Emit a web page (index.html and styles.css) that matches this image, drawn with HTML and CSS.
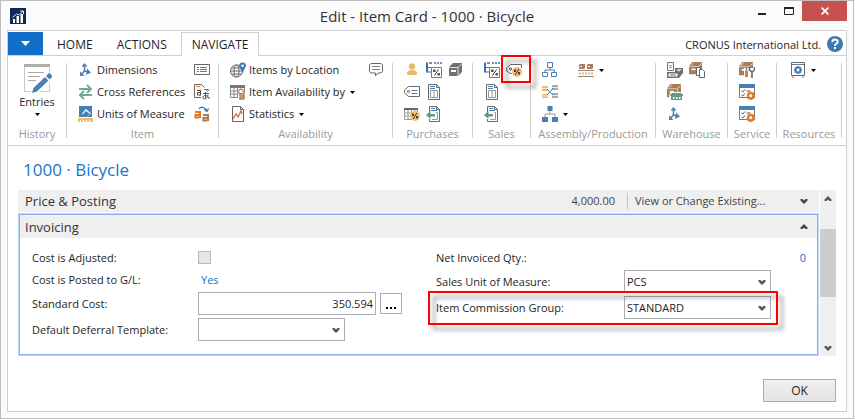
FILE: index.html
```html
<!DOCTYPE html>
<html lang="en">
<head>
<meta charset="utf-8">
<meta name="viewport" content="width=device-width, initial-scale=1">
<title>Edit - Item Card - 1000 · Bicycle</title>
<link rel="stylesheet" href="styles.css">
</head>
<body>
<svg class="sprite" aria-hidden="true">
  <symbol id="i-chev" viewBox="0 0 8 6"><path d="M.5 1h2L4 2.600 5.500 1h2v1.500L4 6 .5 2.500z" fill="currentColor"/></symbol>
  <symbol id="i-chev-up" viewBox="0 0 8 6"><path d="M.5 5h2L4 3.400 5.500 5h2V3.500L4 0 .5 3.500z" fill="currentColor"/></symbol>
  <symbol id="i-drop" viewBox="0 0 5 3"><path d="M0 0h5L2.500 3z" fill="#000"/></symbol>
  <symbol id="i-axes" viewBox="0 0 16 16"><path d="M6.500 3v6M6.500 9l-3 3M6.500 9l4 1" fill="none" stroke="#4a7fb5" stroke-width="1.600"/><path d="M6.500 1l3 3.500h-6zM2 9.500V14h4.500zM9 6.500l4 4-5 2.500z" fill="#4a7fb5"/></symbol>
  <symbol id="i-discount" viewBox="0 0 16 16"><path d="M1 .5v10" stroke="#3f6fa8" stroke-width="2"/><path d="M3 1h3M8 1h2M11 1h2M14 1h2" stroke="#3f6fa8" stroke-width="1.400"/><path d="M2 5.500h3M2 10h3" stroke="#3f6fa8"/><path d="M5.500 5.500h10v10h-10z" fill="#fff" stroke="#777"/><path d="M12.500 7.500l-4 6" stroke="#333"/><path d="M7 7.500h2.500V10H7zM11.500 11H14v2.500h-2.500z" fill="#555"/></symbol>
  <symbol id="i-doc" viewBox="0 0 16 16"><path d="M2.500.5h8l3 3v12h-11zM10.500.5v3h3" fill="#fff" stroke="#6a6a6a"/><path d="M4 2.500h5M4 4.500h5" stroke="#4a7fb5"/><path d="M4.500 6.500h7v7h-7zM8 6.500v7" stroke="#999" fill="none"/></symbol>
  <symbol id="i-return" viewBox="0 0 16 16"><path d="M3.500 6V.5h7l3 3v12h-10V13M10.500.5v3h3" fill="#fff" stroke="#6a6a6a"/><path d="M5 2.500h4M5 4.500h6" stroke="#4a7fb5"/><path d="M10 6.500h1.500v7H6" fill="none" stroke="#999"/><path d="M0 9l4.500-4v3H9v2.500H4.500V13z" fill="#5f9b83"/></symbol>
  <symbol id="i-box" viewBox="0 0 16 16"><path d="M4 0h12v9l-4 6H0V5z" fill="#a67c5b"/><path d="M2 4.500L6 1M12 5l4-3.500M0 5.500h12V14" stroke="#fff" stroke-opacity=".7" fill="none"/><path d="M3 8h5v2H3z" fill="#fff"/></symbol>
  <symbol id="i-gear" viewBox="0 0 8 8"><path d="M3 0h2v1l1-.6L7.600 2 7 3h1v2H7l.6 1L6 7.600 5 7v1H3V7l-1 .6L.4 6 1 5H0V3h1L.4 2 2 .4 3 1z" fill="currentColor"/><circle cx="4" cy="4" r="1.400" fill="#fff"/></symbol>
  <symbol id="i-check" viewBox="0 0 16 16"><path d="M.5 1.500h15v12H.5z" fill="#fff" stroke="#777"/><path d="M0 0h16v4H0z" fill="#4a7fb5"/><path d="M2.500 7l1.200 1L6 5.500M2.500 11l1.200 1L6 9.500" stroke="#444" fill="none"/><path d="M7.500 7h4" stroke="#555"/><use href="#i-gear" x="7.500" y="7.500" width="8.500" height="8.500" color="#e87722"/></symbol>
  <symbol id="i-badge" viewBox="0 0 10 10"><circle cx="5" cy="5" r="5" fill="#f0bf74"/><path d="M6.800 2L3.200 8" stroke="#333"/><path d="M2 2.500h2v2.500H2zM6 5h2v2.500H6z" fill="#444"/></symbol>
  <symbol id="i-tag" viewBox="0 0 16 16"><path d="M4.500 2.500h11v10h-11L.6 9V6z" fill="#fff" stroke="#6a6a6a"/><circle cx="4.500" cy="7.500" r="1.100" fill="none" stroke="#555"/><path d="M7.500 6.500h6M7.500 9.500h6" stroke="#4a7fb5"/></symbol>
</svg>

<div class="window">
  <header class="titlebar">
    <svg class="logo" viewBox="0 0 16 16" aria-hidden="true"><path d="M0 0h16v16H0z" fill="#0b2a55"/><path d="M3 11h2v4H3zM6.500 8h2.500v7H6.500zM10.500 6h2.500v9h-2.500z" fill="#fff"/><path d="M2.500 9.500l4-3.500 3 1 3.500-4M10 3h3.500v3" fill="none" stroke="#dfe7f0"/></svg>
    <h1 class="window-title">Edit - Item Card - 1000 · Bicycle</h1>
    <div class="window-buttons">
      <button class="win-btn" aria-label="Minimize"><svg width="10" height="10" viewBox="0 0 10 10"><path d="M1 7h8v2H1z" fill="#222"/></svg></button>
      <button class="win-btn" aria-label="Maximize"><svg width="10" height="8" viewBox="0 0 10 8"><path d="M.5 1h9v6.500h-9z" fill="none" stroke="#222"/><path d="M0 0h10v2H0z" fill="#222"/></svg></button>
      <button class="win-btn close" aria-label="Close"><svg width="8" height="8" viewBox="0 0 8 8"><path d="M.7.7l6.600 6.600M7.300.7L.7 7.300" stroke="#fff" stroke-width="1.700"/></svg></button>
    </div>
  </header>

  <main class="shell">
    <nav class="tabs">
      <button class="app-menu" aria-label="Application menu"><svg width="9" height="5" viewBox="0 0 9 5"><path d="M0 0h9L4.500 5z" fill="#fff"/></svg></button>
      <button class="tab">HOME</button>
      <button class="tab">ACTIONS</button>
      <button class="tab active">NAVIGATE</button>
      <span class="company">CRONUS International Ltd.</span>
      <button class="help" aria-label="Help"><svg width="16" height="16" viewBox="0 0 16 16"><circle cx="8" cy="8" r="8" fill="#3f78b3"/><path d="M5.300 6c0-3.400 5.400-3.400 5.400-.3 0 2-2.700 2-2.700 4" fill="none" stroke="#fff" stroke-width="2"/><path d="M7 11h2v2H7z" fill="#fff"/></svg></button>
    </nav>

    <div class="ribbon">
      <section class="group history">
        <button class="big-cmd">
          <svg width="30" height="31" viewBox="0 0 30 31"><path d="M2.500 2.500h25v26h-25z" fill="#fff" stroke="#c9c9c9"/><path d="M2 1h26v3H2z" fill="#adadad"/><path d="M6 9.500h16M6 13.500h12M6 17.500h8" stroke="#aaa"/><path d="M8 31l2-8L25 9l5 3v5L15 31z" fill="#fff"/><path d="M10 30l1.500-5L23 14l3.500 3.500L15 28.500zM24 13l2.500-2.500c1-1 4.500 2.500 3.500 3.500L27.500 16.500z" fill="#4a80ba"/></svg>
          <span>Entries</span>
          <svg class="drop" width="5" height="3"><use href="#i-drop"/></svg>
        </button>
        <h2>History</h2>
      </section>

      <section class="group item">
        <div class="cmds">
          <button class="cmd"><svg class="ico"><use href="#i-axes"/></svg>Dimensions</button>
          <button class="cmd" aria-label="Extended texts"><svg class="ico" viewBox="0 0 16 16"><path d="M.5 2.500h15v10H.5z" fill="#fff" stroke="#666"/><path d="M3 5.500h2M3 7.500h2M3 9.500h2M6 5.500h7M6 7.500h7M6 9.500h7" stroke="#4a7fb5"/></svg></button>
          <button class="cmd"><svg class="ico" viewBox="0 0 16 16"><path d="M1 5h11M3 11h11" stroke="#74a893" stroke-width="2"/><path d="M9 1l4 4-4 4M6 7l-4 4 4 4" fill="none" stroke="#74a893" stroke-width="2"/></svg>Cross References</button>
          <button class="cmd" aria-label="Translations"><svg class="ico" viewBox="0 0 16 16"><path d="M7 13.500H.5V.5h7l3 3" fill="#fff" stroke="#666"/><path d="M2 2.500h4" stroke="#e87722"/><path d="M3 6.500h3.500v5M6.500 8.500H3.500v2.500h3" fill="none" stroke="#444"/><path d="M10 5.500h4M12 5.500l1.500 2L15.500 5" fill="none" stroke="#4a7fb5"/><path d="M9 9.500h6M11.500 8v7M14 11c-1 5-6 5-5 2s7-1 6 2" fill="none" stroke="#555"/></svg></button>
          <button class="cmd"><svg class="ico" viewBox="0 0 16 16"><path d="M1 0h13v11H1z" fill="#4a7fb5"/><path d="M8 3l5 4.500L8 12 4 7.500z" fill="#fff"/><path d="M8 5l4 3-3 3H5.500L5 8z" fill="#4a7fb5"/><path d="M0 12h15v4H0z" fill="#eac06b"/><path d="M2.500 14v2M5.500 14v2M8.500 14v2M11.500 14v2" stroke="#fff"/></svg>Units of Measure</button>
          <button class="cmd" aria-label="Substitutions"><svg class="ico" viewBox="0 0 16 16"><path d="M5 3c2-3 6-2 8 2M10 3.500l3 2 1.500-3" fill="none" stroke="#4a7fb5" stroke-width="1.400"/><path d="M1 6h5v6M6 9H1.500v2.500H5" fill="none" stroke="#e87722" stroke-width="2"/><path d="M9 9h5v6M14 12H9.500v2.500H13" fill="none" stroke="#a67c5b" stroke-width="2"/></svg></button>
        </div>
        <h2>Item</h2>
      </section>

      <section class="group availability">
        <div class="cmds">
          <button class="cmd"><svg class="ico" viewBox="0 0 16 16"><circle cx="6.500" cy="9" r="6" fill="#fff" stroke="#666"/><ellipse cx="6.500" cy="9" rx="2.500" ry="6" fill="none" stroke="#666"/><path d="M.5 9h12M1.500 6h10M1.500 12h10" stroke="#666"/><path d="M12.500 11L9 4a3.500 3.500 0 1 1 7 0z" fill="#3f78b3"/><circle cx="12.500" cy="3.800" r="1.300" fill="#fff"/></svg>Items by Location</button>
          <button class="cmd" aria-label="Comments"><svg class="ico" viewBox="0 0 16 16"><path d="M3 1.500h10l1.500 1.500v6.500L13 11h-3l-2.500 3V11H3L1.500 9.500V3z" fill="#fff" stroke="#666"/><path d="M4 4.500h8M4 7.500h8" stroke="#888"/></svg></button>
          <button class="cmd"><svg class="ico" viewBox="0 0 16 16"><path d="M.5 1.500h14v12H.5zM.5 7h14M.5 10h14M4 4v9M7.500 4v9M11 4v9" fill="#fff" stroke="#8a8a8a"/><path d="M0 1h15v3H0z" fill="#777"/><path d="M9 5.500h4v4H9z" fill="#fff" stroke="#e87722"/><path d="M8 10h8v6H8z" fill="#fff"/><path d="M9 11h5v4M14 13h-4v2h4" fill="none" stroke="#a67c5b" stroke-width="1.500"/></svg>Item Availability by<svg class="drop"><use href="#i-drop"/></svg></button>
          <span></span>
          <button class="cmd"><svg class="ico" viewBox="0 0 16 16"><path d="M2.500.5h8l3 3v12h-11zM10.500.5v3h3" fill="#fff" stroke="#666"/><path d="M3 13l3-5 2 3 3-6 1 3" fill="none" stroke="#d9604c" stroke-width="1.300"/></svg>Statistics<svg class="drop"><use href="#i-drop"/></svg></button>
        </div>
        <h2>Availability</h2>
      </section>

      <section class="group purchases">
        <div class="cmds">
          <button class="cmd" aria-label="Vendors"><svg class="ico" viewBox="0 0 16 16"><circle cx="8" cy="4.500" r="3.200" fill="#e9b872"/><path d="M3 13v-2c0-4 10-4 10 0v2z" fill="#e9b872"/></svg></button>
          <button class="cmd" aria-label="Line discounts"><svg class="ico"><use href="#i-discount"/></svg></button>
          <button class="cmd" aria-label="Orders"><svg class="ico" viewBox="0 0 16 16"><path d="M5 1h9v9l-4 4H1V5z" fill="#707070"/><path d="M1 5.500h9V14M10 5.500L14 1.500" stroke="#ddd" fill="none"/><path d="M3 8h5v2H3z" fill="#fff"/></svg></button>
          <button class="cmd" aria-label="Prices"><svg class="ico"><use href="#i-tag"/></svg></button>
          <button class="cmd" aria-label="Purchase orders"><svg class="ico"><use href="#i-doc"/></svg></button>
          <span></span>
          <button class="cmd" aria-label="Prepayment percentages"><svg class="ico" viewBox="0 0 16 16"><path d="M.5 2.500h13v11H.5zM.5 7h13M.5 10h13M4 4v9M7.500 4v9M11 4v9" fill="#fff" stroke="#999"/><path d="M0 2h14v2H0z" fill="#666"/><use href="#i-badge" x="6" y="5" width="10" height="10"/></svg></button>
          <button class="cmd" aria-label="Return orders"><svg class="ico"><use href="#i-return"/></svg></button>
        </div>
        <h2>Purchases</h2>
      </section>

      <section class="group sales">
        <div class="cmds">
          <button class="cmd" aria-label="Sales discounts"><svg class="ico"><use href="#i-discount"/></svg></button>
          <button class="cmd marked" aria-label="Commissions"><svg class="ico" viewBox="0 0 16 16"><path d="M15.500 6V2.500h-11L.6 6v3l3.900 2.500H6" fill="#fff" stroke="#6a6a6a"/><circle cx="4.500" cy="7" r="1.100" fill="none" stroke="#555"/><use href="#i-badge" x="6" y="5" width="10" height="10"/></svg></button>
          <button class="cmd" aria-label="Sales orders"><svg class="ico"><use href="#i-doc"/></svg></button>
          <span></span>
          <button class="cmd" aria-label="Sales return orders"><svg class="ico"><use href="#i-return"/></svg></button>
        </div>
        <h2>Sales</h2>
      </section>

      <section class="group assembly">
        <div class="cmds">
          <button class="cmd" aria-label="Structure"><svg class="ico" viewBox="0 0 16 16"><path d="M5.500.5h5v5h-5zM.5 10.500h5v4h-5zM9.500 10.500h5v4h-5zM8 5.500V8M3 10.500V8h9.500v2.500" fill="none" stroke="#4a7fb5"/></svg></button>
          <button class="cmd" aria-label="Production"><svg class="ico" viewBox="0 0 16 16"><path d="M2 2h5v4L6 7H1V3zM10 2h5v4l-1 1H9V3z" fill="#a67c5b"/><path d="M2 4.500h2M10 4.500h2" stroke="#fff"/><path d="M0 8.500h16M0 14.500h16" stroke="#888"/><path d="M1 11.500h14" stroke="#e9b872" stroke-width="2" stroke-dasharray="2 1"/></svg><svg class="drop"><use href="#i-drop"/></svg></button>
          <button class="cmd" aria-label="Where used"><svg class="ico" viewBox="0 0 16 16"><path d="M0 2h6v5H0zM0 10h6v4H0z" fill="#e9b872"/><path d="M10 1h6v5h-6zM10 9h6v5h-6z" fill="#aaa"/><path d="M0 4.500h6M0 12h6M10 3.500h6M10 11.500h6" stroke="#fff" stroke-width=".7"/><path d="M5 11l6-7M5 5l6 6" stroke="#4a7fb5"/></svg></button>
          <span></span>
          <button class="cmd" aria-label="Assembly list"><svg class="ico" viewBox="0 0 16 16"><path d="M5.500 0h5v5h-5zM0 11h6v5H0zM10 11h6v5h-6z" fill="#4a7fb5"/><path d="M8 5v3M3 11V8h10v3" fill="none" stroke="#999"/></svg><svg class="drop"><use href="#i-drop"/></svg></button>
        </div>
        <h2>Assembly/Production</h2>
      </section>

      <section class="group warehouse">
        <div class="cmds">
          <button class="cmd" aria-label="Bin contents"><svg class="ico" viewBox="0 0 16 16"><path d="M.5.5h6v8h-6z" fill="#fff" stroke="#777"/><path d="M2 3.500h3M2 5.500h3" stroke="#999"/><path d="M8 6h8v5l-4 5H0v-6h8z" fill="#707070"/><path d="M9 8l3-1h3l-3 2.500z" fill="#ddd"/><path d="M1.500 11.500h9v3h-9z" fill="#fff"/><path d="M3 13h6" stroke="#707070"/></svg></button>
          <button class="cmd" aria-label="Stockkeeping units"><svg class="ico" viewBox="0 0 16 16"><use href="#i-box" width="13" height="13"/><path d="M7.500 5.500h4v8h-4z" fill="#fff" stroke="#666"/><path d="M10.500 7.500h3l2 2v6h-5z" fill="#fff" stroke="#666"/></svg></button>
          <button class="cmd" aria-label="Locations"><svg class="ico" viewBox="0 0 16 16"><use href="#i-box" width="14" height="14"/><path d="M2 11l2-3h12v8H3z" fill="#fff"/><path d="M3 11l2-2h9l2 2v1H3zM4 12h11v4H4z" fill="#5f9b83"/><path d="M6 13h1.500v2H6zM9 13h1.500v2H9zM12 13h1.500v2H12z" fill="#fff"/></svg></button>
          <span></span>
          <button class="cmd" aria-label="Warehouse dimensions"><svg class="ico"><use href="#i-axes"/></svg></button>
        </div>
        <h2>Warehouse</h2>
      </section>

      <section class="group service">
        <div class="cmds">
          <button class="cmd" aria-label="Service items"><svg class="ico" viewBox="0 0 16 16"><use href="#i-box" width="14" height="14"/><path d="M5 6h11v10H5z" fill="#fff"/><path d="M7.500 5v5" stroke="#888" stroke-width="1.500"/><path d="M6 9h3v6H6z" fill="#e87722"/><path d="M10.500 5v3l2.500 2 2.500-2V5M13 10v6" fill="none" stroke="#666" stroke-width="1.600"/></svg></button>
          <button class="cmd" aria-label="Troubleshooting"><svg class="ico"><use href="#i-check"/></svg></button>
          <button class="cmd" aria-label="Troubleshooting setup"><svg class="ico"><use href="#i-check"/></svg></button>
        </div>
        <h2>Service</h2>
      </section>

      <section class="group resources">
        <div class="cmds">
          <button class="cmd" aria-label="Resource skills"><svg class="ico" viewBox="0 0 16 16"><path d="M1.500.5h13v13h-13z" fill="#fff" stroke="#666"/><path d="M2 2.500h12M3 14v2M13 14v2" stroke="#777"/><use href="#i-gear" x="4" y="4" width="8" height="8" color="#4a7fb5"/></svg><svg class="drop"><use href="#i-drop"/></svg></button>
        </div>
        <h2>Resources</h2>
      </section>
    </div>

    <div class="page">
      <h2 class="page-title">1000 · Bicycle</h2>
      <div class="scroller">
        <div class="fasttabs">
          <button class="tab-head collapsed">
            <span class="head-name">Price &amp; Posting</span>
            <span class="summary">4,000.00</span>
            <span class="summary more">View or Change Existing...</span>
            <svg class="chev"><use href="#i-chev"/></svg>
          </button>
          <section class="fasttab">
            <button class="tab-head">
              <span class="head-name">Invoicing</span>
              <svg class="chev"><use href="#i-chev-up"/></svg>
            </button>
            <div class="fields">
              <div class="column">
                <div class="field"><label for="adjusted">Cost is Adjusted:</label><input type="checkbox" id="adjusted" disabled></div>
                <div class="field"><span>Cost is Posted to G/L:</span><a class="inset" href="#">Yes</a></div>
                <div class="field"><label for="cost">Standard Cost:</label><input class="text" id="cost" type="text" value="350.594"><button class="assist" aria-label="Look up standard cost"><svg width="10" height="2" viewBox="0 0 10 2"><path d="M0 0h2v2H0zM4 0h2v2H4zM8 0h2v2H8z" fill="#000"/></svg></button></div>
                <div class="field"><label for="deferral">Default Deferral Template:</label><span class="combo"><select id="deferral"><option></option></select><svg class="chev"><use href="#i-chev"/></svg></span></div>
              </div>
              <div class="column right">
                <div class="field"><span>Net Invoiced Qty.:</span><a class="end" href="#">0</a></div>
                <div class="field"><label for="uom">Sales Unit of Measure:</label><span class="combo"><select id="uom"><option>PCS</option></select><svg class="chev"><use href="#i-chev"/></svg></span></div>
                <div class="field marked"><label for="commission">Item Commission Group:</label><span class="combo"><select id="commission"><option>STANDARD</option></select><svg class="chev"><use href="#i-chev"/></svg></span></div>
              </div>
            </div>
          </section>
        </div>
        <div class="scrollbar" aria-hidden="true">
          <svg class="chev"><use href="#i-chev-up"/></svg>
          <div class="track"><div class="thumb"></div></div>
          <svg class="chev"><use href="#i-chev"/></svg>
        </div>
      </div>
      <footer class="actions"><button class="ok">OK</button></footer>
    </div>
  </main>
</div>
</body>
</html>
```

FILE: styles.css
```css
* { box-sizing: border-box; }

body {
  margin: 0;
  font: 11px/16px "Open Sans", "Noto Sans", sans-serif;
  color: #1e1e1e;
}

h1, h2 { margin: 0; font-weight: 400; }

button {
  margin: 0;
  padding: 0;
  border: 0;
  background: none;
  font: inherit;
  color: inherit;
}

svg { display: block; flex: none; }
.sprite { position: absolute; width: 0; height: 0; }

.window {
  display: flex;
  flex-direction: column;
  min-height: 100vh;
  padding: 0 6px 6px;
  border: 1px solid #bdbdbd;
  background: #fbfbfb;
}

/* Title bar */
.titlebar {
  display: grid;
  grid-template-columns: 1fr auto 1fr;
  align-items: center;
  height: 29px;
}
.logo { width: 16px; height: 16px; margin-left: 3px; }
.window-title { font-size: 15px; line-height: 20px; color: #333; }
.window-buttons { display: flex; justify-content: flex-end; align-self: start; }
.win-btn {
  display: flex;
  align-items: center;
  justify-content: center;
  width: 27px;
  height: 20px;
}
.win-btn.close { width: 45px; background: #c75050; }

/* Shell and tabs */
.shell {
  flex: 1;
  display: flex;
  flex-direction: column;
  border: 1px solid #d0d0d0;
  background: #fff;
}
.tabs {
  display: flex;
  height: 25px;
  padding-top: 1px;
  border-bottom: 1px solid #d0d0d0;
  font-size: 12px;
}
.app-menu {
  display: flex;
  align-items: center;
  justify-content: center;
  width: 35px;
  margin-right: 2px;
  background: #116fc9;
}
.tab { padding: 2px 12px 0; }
.tab.active {
  margin: 0 0 -1px 2px;
  padding: 1px 10px 0;
  border: 1px solid #d0d0d0;
  border-bottom: 0;
  background: #fff;
}
.company { margin: 5px 6px 0 auto; font-size: 11px; }
.help { align-self: center; margin-right: 3px; }

/* Ribbon */
.ribbon {
  display: grid;
  grid-template-columns: 59fr 152fr 174fr 80fr 58fr 125fr 72fr 49fr 65fr;
  height: 90px;
  padding: 7px 4px 7px 0;
  border-bottom: 1px solid #d0d0d0;
}
.group {
  display: flex;
  flex-direction: column;
  justify-content: space-between;
  min-width: 0;
  border-right: 1px solid #d0d0d0;
}
.group h2 {
  margin-bottom: -2px;
  font-size: 11px;
  line-height: 12px;
  text-align: center;
  color: #999;
  white-space: nowrap;
}
.big-cmd {
  display: flex;
  flex-direction: column;
  align-items: center;
}
.big-cmd .drop { margin: 3px 0 0; }
.cmds {
  display: grid;
  grid-template-columns: repeat(3, 16px);
  grid-auto-rows: 22px;
  column-gap: 6px;
  margin-top: -4px;
  padding-left: 11px;
}
.item .cmds { grid-template-columns: 110px 16px; }
.availability .cmds { grid-template-columns: 132px 16px; }
.sales .cmds { grid-template-columns: repeat(2, 16px); }
.assembly .cmds { grid-template-columns: 30px 30px; }
.warehouse .cmds { grid-template-columns: repeat(2, 16px); }
.service .cmds { grid-template-columns: 16px; }
.resources .cmds { padding-left: 13px; grid-template-columns: 30px; }
.cmd {
  display: flex;
  align-items: center;
  gap: 3px;
  white-space: nowrap;
}
.ico { width: 16px; height: 16px; }
.drop { width: 5px; height: 3px; margin-left: 2px; }

/* Red callouts lie over the control that they frame */
.marked { position: relative; }
.marked::after {
  content: "";
  position: absolute;
  z-index: 1;
  border: 2px solid #f00;
  filter: drop-shadow(5px 5px 2px rgba(0, 0, 0, 0.4));
  pointer-events: none;
}
.cmd.marked::after { inset: -4px -9px -2px -5px; }
.field.marked::after { inset: -5px 28px -6px -8px; }

/* Page */
.page {
  flex: 1;
  display: flex;
  flex-direction: column;
  padding: 12px 10px 9px;
}
.page-title {
  padding-left: 5px;
  font-size: 17px;
  line-height: 24px;
  color: #1a73c9;
}
.scroller { display: flex; gap: 1px; margin-top: 8px; }
.fasttabs { flex: 1; }
.tab-head {
  display: flex;
  align-items: center;
  width: 100%;
  height: 23px;
  padding: 0 9px 0 5px;
  background: #efefef;
  text-align: left;
  color: #333;
}
.tab-head.collapsed { height: 22px; margin-bottom: 1px; padding: 0 11px 0 7px; }
.head-name { flex: 1; font-size: 13px; }
.summary { padding-right: 12px; line-height: 16px; color: #444; }
.summary.more { width: 173px; padding: 0 0 0 7px; border-left: 1px solid #c4c4c4; }
.chev { width: 8px; height: 6px; color: #444; }
.fasttab { border: 1px solid #bcd5fb; outline: 1px solid #85b2f5; outline-offset: -2px; padding: 1px; }
.fields {
  display: grid;
  grid-template-columns: 1fr 1fr;
  gap: 34px;
  padding: 10px 11px 13px 12px;
}
.column { display: flex; flex-direction: column; gap: 3px; }
.field {
  display: grid;
  grid-template-columns: 166px 1fr auto;
  align-items: center;
  min-height: 19px;
}
.right .field { grid-template-columns: 188px 1fr; }
.field a { color: #0f6fd0; text-decoration: none; }
.field .inset { padding-left: 3px; }
.field .end { text-align: right; }
.field input[type="checkbox"] {
  appearance: none;
  width: 13px;
  height: 13px;
  margin: 0;
  border: 1px solid #b8b8b8;
  background: #e6e6e6;
}
.text, select {
  width: 100%;
  min-width: 0;
  height: 23px;
  margin: 0;
  padding: 0 2px;
  border: 1px solid #abadb3;
  border-radius: 0;
  background: #fff;
  font: inherit;
  color: inherit;
}
.text { text-align: right; }
select { display: block; appearance: none; }
.combo { position: relative; width: 147px; }
.combo .chev { position: absolute; right: 5px; top: 9px; color: #555; pointer-events: none; }
.assist {
  display: flex;
  align-items: flex-end;
  justify-content: center;
  width: 22px;
  height: 21px;
  margin-left: 4px;
  padding-bottom: 4px;
  border: 1px solid #abadb3;
}

.scrollbar {
  display: flex;
  flex-direction: column;
  align-items: center;
  width: 16px;
  padding: 6px 0 5px;
  background: #efefef;
}
.scrollbar .chev { color: #555; }
.track { flex: 1; width: 100%; padding: 27px 0; }
.thumb { height: 68px; background: #cdcdcd; }

.actions { display: flex; justify-content: flex-end; margin-top: auto; }
.ok {
  width: 73px;
  height: 23px;
  border: 1px solid #acacac;
  background: linear-gradient(#f0f0f0, #e4e4e4);
  font-size: 12px;
}
```
